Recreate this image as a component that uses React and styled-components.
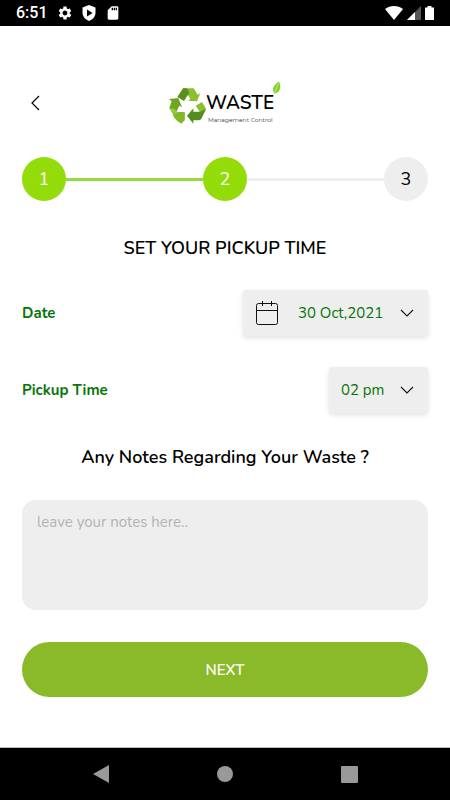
import React, { useState } from "react";
import styled, { createGlobalStyle } from "styled-components";
import { MdSettings, MdSdCard } from "react-icons/md";

const STEPS = [1, 2, 3];
const DATES = ["30 Oct,2021", "31 Oct,2021", "01 Nov,2021"];
const TIMES = ["02 pm", "03 pm", "04 pm", "05 pm"];

function RecycleIcon() {
  return (
    <svg width="38" height="38" viewBox="0 0 114 114" aria-hidden="true">
      {/* top arrow */}
      <path d="M45 4 H77 L89 23 L97 18 L87 43 L60 41 L67 36 L54 14 Z" fill="#8abf2e" />
      <path d="M45 4 L28 30 L48 42 L64 17 L57 4 Z" fill="#5b8f1d" />
      {/* right arrow */}
      <path d="M83 56 L102 45 L114 66 L103 86 Z" fill="#8abf2e" />
      <path d="M76 74 H97 L114 66 L100 95 Q97 100 91 100 H76 V110 L57 86 L76 64 Z" fill="#568a1c" />
      {/* left arrow */}
      <path d="M3 36 L31 33 L42 60 L34 56 L20 84 L4 63 L11 43 Z" fill="#6fa523" />
      <path d="M4 63 L20 92 Q25 100 33 100 H50 V75 H28 L20 66 Z" fill="#94c83a" />
      <path d="M15 84 L20 93 Q27 104 40 110 L50 100 V75 H36 Z" fill="#82b62c" />
    </svg>
  );
}

function LeafIcon() {
  return (
    <svg width="10" height="14" viewBox="0 0 20 28" aria-hidden="true">
      <path d="M14 1 C2 9 -1 18 5 25 C15 23 20 14 14 1 Z" fill="#7ed321" />
      <path d="M13 5 C9 13 7 19 5 27" fill="none" stroke="#c5ee92" strokeWidth="2" />
    </svg>
  );
}

function CalendarIcon() {
  return (
    <svg width="24" height="24" viewBox="0 0 24 24" fill="none" stroke="#111" aria-hidden="true">
      <rect x="1.5" y="2.5" width="21" height="21" rx="2" />
      <path d="M1.5 9.5 H22.5 M7.5 0 V5 M16.5 0 V5" />
    </svg>
  );
}

function ChevronIcon() {
  return (
    <svg width="14" height="8" viewBox="0 0 14 8" fill="none" stroke="#111" aria-hidden="true">
      <path d="M1 1 L7 7 L13 1" strokeWidth="1.1" />
    </svg>
  );
}

function App() {
  const [currentStep, setCurrentStep] = useState(2);
  const [date, setDate] = useState(DATES[0]);
  const [time, setTime] = useState(TIMES[0]);
  const [notes, setNotes] = useState("");

  const handleSubmit = (e) => {
    e.preventDefault();
    setCurrentStep((prev) => Math.min(prev + 1, STEPS.length));
  };

  return (
    <>
      <GlobalStyle />
      <Screen>
        <StatusBar>
          <StatusGroup>
            <Clock>6:51</Clock>
            <MdSettings size={16} />
            <svg width="14" height="16" viewBox="0 0 14 16" aria-hidden="true">
              <path d="M7 0 L13.500 2.500 V7.500 C13.500 11.500 11 14.500 7 16 C3 14.500 0.500 11.500 0.500 7.500 V2.500 Z" fill="#fff" />
              <path d="M5 4.500 L10.500 8 L5 11.500 Z" fill="#000" />
            </svg>
            <MdSdCard size={16} />
          </StatusGroup>
          <SignalGroup>
            <svg width="18" height="14" viewBox="0 0 18 14" aria-hidden="true">
              <path d="M0 3 C5 -1 13 -1 18 3 L9 14 Z" fill="#fff" />
            </svg>
            <svg width="14" height="14" viewBox="0 0 14 14" aria-hidden="true">
              <path d="M14 0 V14 H0 Z" fill="#555" />
              <path d="M8 6 V14 H0 Z" fill="#fff" />
            </svg>
            <svg width="9" height="14" viewBox="0 0 9 14" aria-hidden="true">
              <path d="M2.500 0 H6.500 V1.500 H9 V14 H0 V1.500 H2.500 Z" fill="#fff" />
            </svg>
          </SignalGroup>
        </StatusBar>

        <Content onSubmit={handleSubmit}>
          <Header>
            <BackButton type="button" aria-label="Back">
              <svg width="9" height="16" viewBox="0 0 9 16" fill="none" stroke="#000" aria-hidden="true">
                <path d="M8 1 L1 8 L8 15" strokeWidth="1.2" />
              </svg>
            </BackButton>
            <Logo>
              <RecycleIcon />
              <LogoText>
                <LogoName>WASTE</LogoName>
                <LogoTagline>Management Control</LogoTagline>
              </LogoText>
              <LeafIcon />
            </Logo>
          </Header>

          <Stepper>
            {STEPS.map((step) => (
              <React.Fragment key={step}>
                {step > 1 && <StepLine $active={step <= currentStep} />}
                <StepCircle $active={step <= currentStep}>{step}</StepCircle>
              </React.Fragment>
            ))}
          </Stepper>

          <Title>SET YOUR PICKUP TIME</Title>

          <Field>
            <FieldLabel htmlFor="date">Date</FieldLabel>
            <Picker>
              <CalendarIcon />
              <PickerSelect id="date" $width="88px" value={date} onChange={(e) => setDate(e.target.value)}>
                {DATES.map((item) => (
                  <option key={item}>{item}</option>
                ))}
              </PickerSelect>
              <ChevronIcon />
            </Picker>
          </Field>

          <Field>
            <FieldLabel htmlFor="time">Pickup Time</FieldLabel>
            <Picker>
              <PickerSelect id="time" $width="45px" value={time} onChange={(e) => setTime(e.target.value)}>
                {TIMES.map((item) => (
                  <option key={item}>{item}</option>
                ))}
              </PickerSelect>
              <ChevronIcon />
            </Picker>
          </Field>

          <NotesLabel htmlFor="notes">Any Notes Regarding Your Waste ?</NotesLabel>
          <Notes
            id="notes"
            placeholder="leave your notes here.."
            value={notes}
            onChange={(e) => setNotes(e.target.value)}
          />

          <NextButton type="submit">NEXT</NextButton>
        </Content>

        <NavBar>
          <NavButton type="button" aria-label="System back">
            <svg width="16" height="18" viewBox="0 0 16 18" aria-hidden="true">
              <path d="M16 0 V18 L0 9 Z" fill="#999" />
            </svg>
          </NavButton>
          <NavButton type="button" aria-label="Home">
            <svg width="16" height="16" viewBox="0 0 16 16" aria-hidden="true">
              <circle cx="8" cy="8" r="8" fill="#999" />
            </svg>
          </NavButton>
          <NavButton type="button" aria-label="Recent apps">
            <svg width="17" height="17" viewBox="0 0 17 17" aria-hidden="true">
              <rect width="17" height="17" rx="1" fill="#999" />
            </svg>
          </NavButton>
        </NavBar>
      </Screen>
    </>
  );
}

const GlobalStyle = createGlobalStyle`
  * {
    box-sizing: border-box;
  }
  body {
    margin: 0;
    background: #fff;
    color: #000;
    font-family: Nunito, "Open Sans", "Noto Sans", sans-serif;
  }
  button, select, textarea {
    font-family: inherit;
  }
  svg {
    display: block;
    flex-shrink: 0;
  }
`;

const Screen = styled.div`
  min-height: 100vh;
  display: flex;
  flex-direction: column;
`;

const StatusBar = styled.div`
  height: 26px;
  padding: 0 16px;
  display: flex;
  align-items: center;
  justify-content: space-between;
  background: #000;
  color: #fff;
`;

const StatusGroup = styled.div`
  display: flex;
  align-items: center;
  gap: 9px;
`;

const SignalGroup = styled.div`
  display: flex;
  align-items: center;
  gap: 4px;
`;

const Clock = styled.span`
  font-family: Roboto, sans-serif;
  font-size: 16px;
  font-weight: 500;
  line-height: 26px;
`;

const Content = styled.form`
  flex: 1;
  display: flex;
  flex-direction: column;
  padding: 52px 22px 48px;
`;

const Header = styled.header`
  display: grid;
  grid-template-columns: 26px 1fr 26px;
  align-items: center;
  height: 50px;
`;

const BackButton = styled.button`
  display: flex;
  justify-content: center;
  padding: 8px 0;
  border: none;
  background: none;
  cursor: pointer;
`;

const Logo = styled.div`
  display: flex;
  justify-content: center;
  align-items: flex-start;
  height: 44px;

  > svg:first-child {
    align-self: flex-end;
  }
`;

const LogoText = styled.div`
  align-self: flex-end;
  display: flex;
  flex-direction: column;
  width: 66px;
`;

const LogoName = styled.span`
  font-size: 19px;
  font-weight: 600;
  line-height: 24px;
`;

const LogoTagline = styled.span`
  padding-left: 2px;
  color: #333;
  font-family: Montserrat, Inter, sans-serif;
  font-size: 6px;
  line-height: 10px;
  white-space: nowrap;
`;

const Stepper = styled.div`
  display: flex;
  align-items: center;
  margin-top: 29px;
`;

const StepCircle = styled.div`
  display: flex;
  align-items: center;
  justify-content: center;
  flex-shrink: 0;
  width: 44px;
  height: 44px;
  border-radius: 50%;
  background: ${({ $active }) => ($active ? "#93dc09" : "#eee")};
  color: ${({ $active }) => ($active ? "#fff" : "#000")};
  font-size: 18px;
  font-weight: 400;
`;

const StepLine = styled.div`
  flex: 1;
  height: 3px;
  background: ${({ $active }) => ($active ? "#93dc3c" : "#eee")};
`;

const Title = styled.h1`
  margin: 34px 0 30px;
  padding-top: 1px;
  font-size: 18px;
  font-weight: 600;
  line-height: 24px;
  text-align: center;
`;

const Field = styled.div`
  display: flex;
  align-items: center;
  justify-content: space-between;
  margin-bottom: 31px;
`;

const FieldLabel = styled.label`
  color: #087508;
  font-size: 15px;
  font-weight: 700;
`;

const Picker = styled.div`
  display: flex;
  align-items: center;
  height: 46px;
  padding: 0 14px 0 12px;
  border-radius: 3px;
  background: #eee;
  box-shadow: 0 2px 5px rgba(0, 0, 0, 0.12);

  > svg:first-child {
    margin-right: 19px;
  }
`;

const PickerSelect = styled.select`
  width: ${({ $width }) => $width};
  height: 100%;
  margin-right: 14px;
  padding: 0;
  border: none;
  appearance: none;
  background: transparent;
  color: #087508;
  font-size: 15px;
  font-weight: 400;
  cursor: pointer;
`;

const NotesLabel = styled.label`
  padding-top: 1px;
  font-size: 18px;
  font-weight: 600;
  line-height: 24px;
  text-align: center;
`;

const Notes = styled.textarea`
  display: block;
  width: 100%;
  height: 110px;
  margin-top: 31px;
  padding: 12px 15px;
  border: none;
  border-radius: 14px;
  background: #eee;
  font-size: 15px;
  line-height: 20px;
  resize: none;

  &::placeholder {
    color: #b3b3b3;
  }
`;

const NextButton = styled.button`
  height: 55px;
  margin-top: 32px;
  border: none;
  border-radius: 28px;
  background: #8aba2a;
  color: #fff;
  font-size: 15px;
  font-weight: 600;
  cursor: pointer;
`;

const NavBar = styled.nav`
  display: flex;
  align-items: center;
  justify-content: center;
  gap: 84px;
  height: 53px;
  border-top: 1px solid #bbb;
  background: #000;
`;

const NavButton = styled.button`
  display: flex;
  align-items: center;
  justify-content: center;
  width: 40px;
  height: 40px;
  padding: 0;
  border: none;
  background: none;
  cursor: pointer;
`;

export default App;
